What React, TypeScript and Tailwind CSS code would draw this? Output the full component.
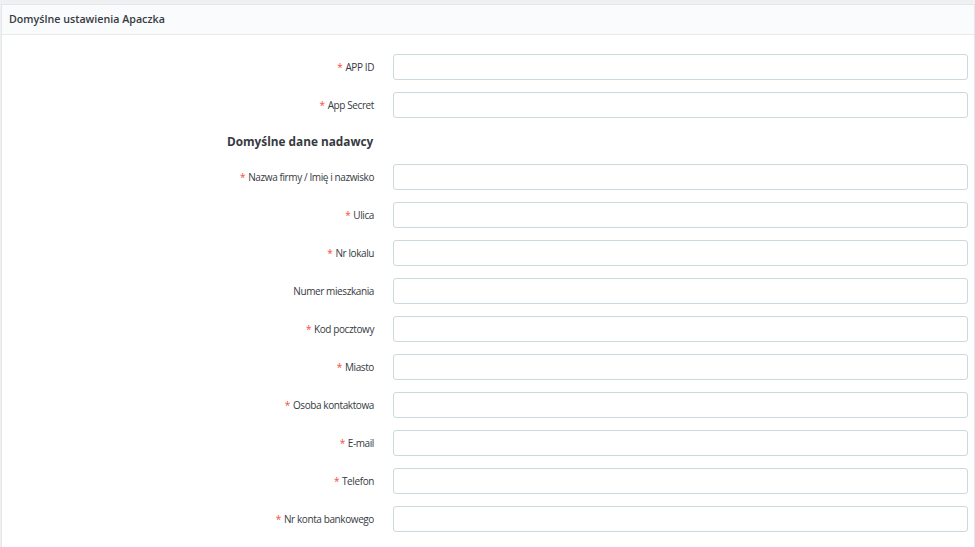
import React from "react";

const fields: { label: string; req: boolean }[] = [
  { label: "Nazwa firmy / Imię i nazwisko", req: true },
  { label: "Ulica", req: true },
  { label: "Nr lokalu", req: true },
  { label: "Numer mieszkania", req: false },
  { label: "Kod pocztowy", req: true },
  { label: "Miasto", req: true },
  { label: "Osoba kontaktowa", req: true },
  { label: "E-mail", req: true },
  { label: "Telefon", req: true },
  { label: "Nr konta bankowego", req: true },
];

function Row({ label, req }: { label: string; req: boolean }) {
  return (
    <div className="flex items-center h-[26px] mb-[12px]">
      <div className="w-[372px] shrink-0 text-right text-[10px] tracking-[-0.4px] text-[#363a41]">
        {req && <span className="text-[#f54c3e] mr-[3px]">*</span>}
        {label}
      </div>
      <div className="flex-1 ml-[19px] mr-[6px] h-[26px] rounded-[3px] border border-[#c9d9de] bg-white" />
    </div>
  );
}

export default function App() {
  return (
    <div
      className="w-[975px] h-[547px] bg-[#eef0f2] pt-[4px] pl-[1px] overflow-hidden"
      style={{ fontFamily: '"Open Sans", "Noto Sans", sans-serif' }}
    >
      <div className="bg-white border border-[#e3e7ea] h-[600px]">
        <div className="h-[30px] bg-[#fafbfc] border-b border-[#e8ebee] flex items-center pl-[7px] pb-[1px] text-[10.7px] font-semibold text-[#363a41]">
          Domyślne ustawienia Apaczka
        </div>
        <div className="pt-[19px]">
          <Row label="APP ID" req={true} />
          <Row label="App Secret" req={true} />
          <div className="pl-[225px] h-[34px] pt-[3px] text-[11.8px] font-bold text-[#363a41]">
            Domyślne dane nadawcy
          </div>
          {fields.map((f) => (
            <Row key={f.label} label={f.label} req={f.req} />
          ))}
        </div>
      </div>
    </div>
  );
}
